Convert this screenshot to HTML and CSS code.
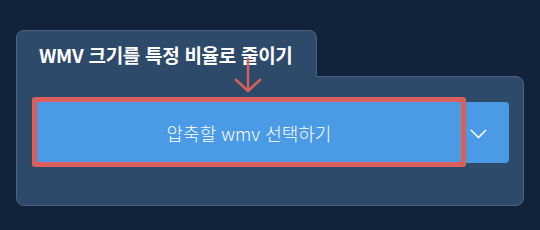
FILE: index.html
```html
<!DOCTYPE html>
<html lang="ko">
  <head>
    <meta charset="utf-8" />
    <title>WMV 크기를 특정 비율로 줄이기</title>
    <link rel="stylesheet" href="styles.css">
  </head>
  <body>
    <div class="card">
      <div class="tab">
        <h2 class="title">WMV 크기를 특정 비율로 줄이기</h2>
      </div>
      <div class="panel">
        <div class="picker">
          <button class="pickMain">압축할 wmv 선택하기</button>
          <button class="pickMore">
            <svg width="17" height="10" viewBox="0 0 17 10">
              <path d="M1 1 L8.5 8.5 L16 1" fill="none" stroke="#fff" stroke-width="1.6" />
            </svg>
          </button>
          <div class="highlight"></div>
        </div>
      </div>
      <svg class="pointer" width="30" height="36" viewBox="0 0 30 36">
        <path d="M15 0 V33 M2 21 L15 33 L28 21" fill="none" stroke="#da5f5a" stroke-width="2.4" />
      </svg>
    </div>
  </body>
</html>
```

FILE: styles.css
```css
* {
  margin: 0;
  padding: 0;
  box-sizing: border-box;
}

body {
  background-color: #11223a;
  padding: 30px 16px;
  font-family: "Noto Sans CJK KR", "Noto Sans", sans-serif;
}

.card {
  position: relative;
  width: 508px;
}

.tab {
  position: relative;
  z-index: 1;
  width: 301px;
  height: 47px;
  margin-bottom: -1px;
  padding: 11px 0 0 22px;
  background-color: #2d4a6b;
  border: 1px solid #4b6384;
  border-bottom: none;
  border-radius: 8px 8px 0 0;
}

.title {
  color: #fff;
  font-size: 19px;
  font-weight: 700;
  line-height: 26px;
  letter-spacing: -0.3px;
  white-space: nowrap;
}

.panel {
  height: 130px;
  padding: 25px 14px 0 15px;
  background-color: #2d4a6b;
  border: 1px solid #4b6384;
  border-radius: 0 8px 8px 8px;
}

.picker {
  position: relative;
  display: flex;
  height: 61px;
}

button {
  border: none;
  background-color: #4a9ae6;
  color: #fff;
  font-family: inherit;
}

.pickMain {
  flex: 1;
  border-radius: 4px 0 0 4px;
  font-size: 18px;
  font-weight: 300;
  padding-left: 4px;
}

.pickMore {
  width: 47px;
  display: flex;
  align-items: center;
  padding-left: 8px;
  padding-top: 2px;
  border-radius: 0 4px 4px 0;
}

.highlight {
  position: absolute;
  top: -5px;
  left: 0;
  width: 434px;
  bottom: -4px;
  border: 5px solid #da5f5a;
  border-radius: 3px;
}

.pointer {
  position: absolute;
  z-index: 2;
  left: 217px;
  top: 28px;
}
```
